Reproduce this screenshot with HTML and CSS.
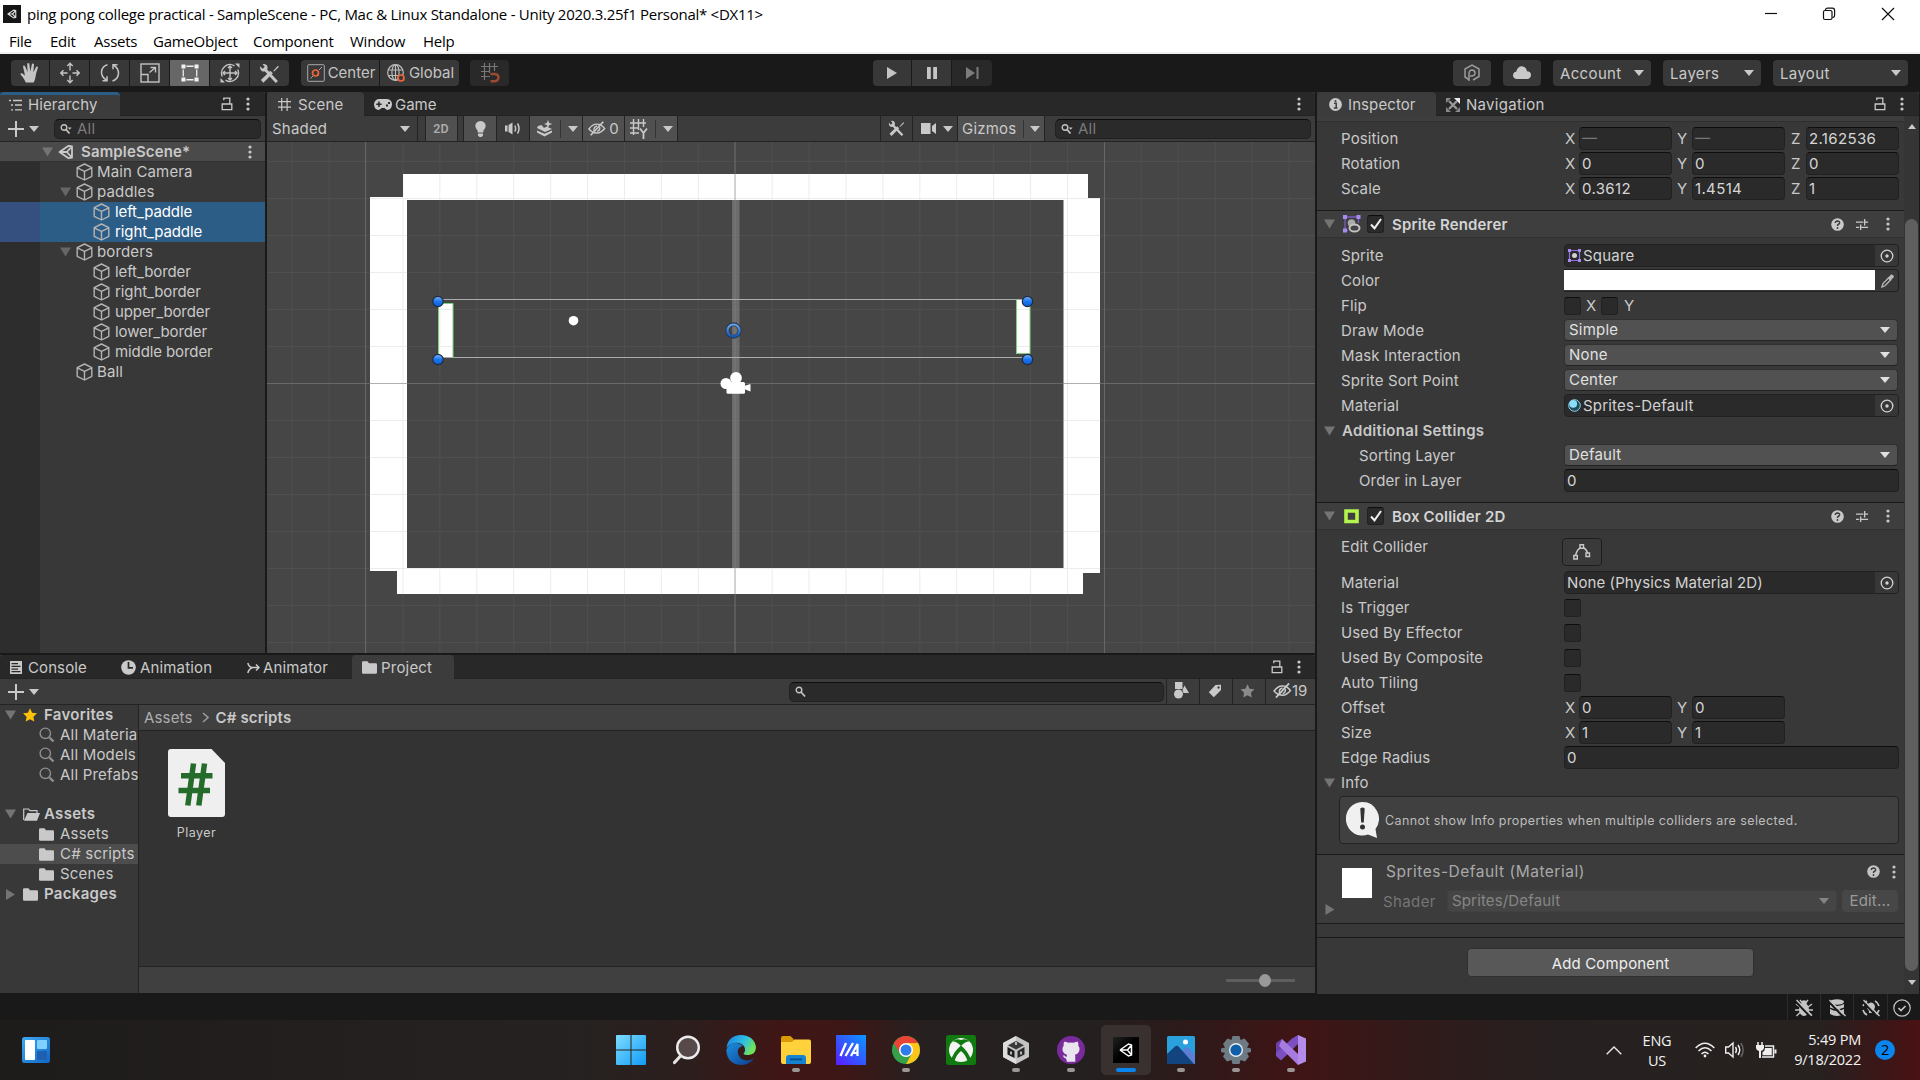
FILE: index.html
```html
<!DOCTYPE html>
<html lang="en">
<head>
<meta charset="utf-8">
<title>ping pong college practical - SampleScene - Unity</title>
<link rel="stylesheet" href="styles.css">
</head>
<body>
<svg class="sprite" width="0" height="0">
  <symbol id="kebab" viewBox="0 0 4 14"><circle cx="2" cy="2" r="1.6"/><circle cx="2" cy="7" r="1.6"/><circle cx="2" cy="12" r="1.6"/></symbol>
  <symbol id="lock" viewBox="0 0 12 14"><path d="M1.2 7h9.6v5.6H1.2zM2.800 3.200V1.200h6V7" fill="none" stroke="currentColor" stroke-width="1.3"/></symbol>
  <symbol id="down" viewBox="0 0 10 6"><path d="M0 0h10L5 6z"/></symbol>
  <symbol id="fold" viewBox="0 0 11 10"><path d="M0 .5h11L5.500 9.500z"/></symbol>
  <symbol id="foldr" viewBox="0 0 10 11"><path d="M.5 0v11L9.500 5.500z"/></symbol>
  <symbol id="cube" viewBox="0 0 17 18"><path d="M8.500 1L15.800 4.600V13.300L8.500 17L1.200 13.300V4.600zM1.200 4.800L8.500 8.400L15.800 4.800M8.500 8.400V17" fill="none" stroke="currentColor" stroke-width="1.400" stroke-linejoin="round"/></symbol>
  <symbol id="unity" viewBox="0 0 16 16"><path d="M1.500 8L10.600 1.800L14 2.300V13.700L10.600 14.200zM1.500 8H8.800M8.800 8L14 2.300M8.800 8L14 13.700" fill="none" stroke="currentColor" stroke-width="1.800" stroke-linejoin="round"/></symbol>
  <symbol id="search" viewBox="0 0 14 12"><circle cx="4" cy="4" r="2.800" fill="none" stroke="currentColor" stroke-width="1.400"/><path d="M6 6l4 4.500" stroke="currentColor" stroke-width="1.800"/></symbol>
  <symbol id="searchd" viewBox="0 0 14 12"><circle cx="4" cy="4.500" r="2.800" fill="none" stroke="currentColor" stroke-width="1.400"/><path d="M6 6.500l3.500 4" stroke="currentColor" stroke-width="1.800"/><path d="M7.800 4.500h3.800l-1.900 2.300z"/></symbol>
  <symbol id="glass" viewBox="0 0 16 16"><circle cx="6.300" cy="6.300" r="5.200" fill="none" stroke="#8f8f8f" stroke-width="1.400"/><path d="M10.500 10.500l4 4" stroke="#8f8f8f" stroke-width="2.400"/></symbol>
  <symbol id="folder" viewBox="0 0 15 13"><path d="M0 1.500Q0 .3 1.200 .3H5.500L7 2.300H13.800Q15 2.300 15 3.500V11.500Q15 12.700 13.800 12.700H1.200Q0 12.700 0 11.500z"/></symbol>
  <symbol id="plus" viewBox="0 0 16 16"><path d="M8 0v16M0 8h16" stroke="currentColor" stroke-width="2"/></symbol>
  <symbol id="tools" viewBox="0 0 20 20"><path d="M3 17.500L12 8.500" stroke="currentColor" stroke-width="3.400"/><path d="M13.500 7.500L18 2.500l1 1L14.500 8z"/><path d="M6 6.500L17 18" stroke="currentColor" stroke-width="2.800"/><path d="M1 3.200L3.500 5.500L5.500 3.600L3.300 1.200Q6.200 .3 7.800 2.600Q8.800 4.500 7.500 6.800Q5 9 2.500 7.600Q.6 6 1 3.200z"/></symbol>
  <symbol id="hash" viewBox="0 0 14 14"><path d="M4 0V14M9.800 0V14M0 4H14M0 9.800H14" stroke="currentColor" stroke-width="1.300"/></symbol>
  <symbol id="eye" viewBox="0 0 20 16"><path d="M1 8.500Q5.500 2.500 10.500 3.200Q15 3.300 18.500 8Q14 13.500 9.500 13Q4.500 12.700 1 8.500zM6.800 10.500Q6 6 10 5.300M10.200 11.200Q13.500 10.500 13 6.500" fill="none" stroke="currentColor" stroke-width="1.600"/><path d="M3 15.500L17 .5" stroke="currentColor" stroke-width="2"/></symbol>
  <symbol id="pick" viewBox="0 0 14 14"><circle cx="7" cy="7" r="5.800" fill="none" stroke="currentColor" stroke-width="1.300"/><circle cx="7" cy="7" r="1.700"/></symbol>
  <symbol id="help" viewBox="0 0 13 13"><circle cx="6.500" cy="6.500" r="6.300"/><path d="M4.300 5Q4.400 3 6.500 3Q8.700 3.100 8.600 4.900Q8.500 5.900 7.200 6.500Q6.500 6.900 6.500 8" fill="none" stroke="#3e3e3e" stroke-width="1.500"/><circle cx="6.500" cy="10" r=".95" fill="#3e3e3e"/></symbol>
  <symbol id="preset" viewBox="0 0 14 14"><path d="M0 4.500H8M10 4.500H13M9.300 1V8M0 10H3.500M5.500 10H13M5 7V13" stroke="currentColor" stroke-width="1.400"/></symbol>
  <symbol id="check" viewBox="0 0 12 12"><path d="M1 6.500L4.500 10.300L11 1" fill="none" stroke="#f0f0f0" stroke-width="2"/></symbol>
  <symbol id="star" viewBox="0 0 14 14"><path d="M7 .3L9.100 4.700L14 5.300L10.400 8.700L11.300 13.500L7 11.200L2.700 13.500L3.600 8.700L0 5.300L4.900 4.700z"/></symbol>
</svg>

<div class="titlebar">
  <svg class="appicon" viewBox="0 0 18 18"><rect width="18" height="18" fill="#151515"/><svg x="4" y="4" width="10" height="10" color="#ddd"><use href="#unity"/></svg></svg>
  <span class="apptitle">ping pong college practical - SampleScene - PC, Mac &amp; Linux Standalone - Unity 2020.3.25f1 Personal* &lt;DX11&gt;</span>
  <svg class="winbtns" viewBox="0 0 150 28" fill="none" stroke="#111" stroke-width="1.200"><path d="M5 13.500H17"/><rect x="63.500" y="10.500" width="8.500" height="9" rx="1.500"/><path d="M65.500 10V9.500Q66 8.200 67.500 8.200H72.500Q74.600 8.400 74.600 10.500V15.500Q74.500 17.500 72.500 17.600"/><path d="M122 8L134 20M134 8L122 20"/></svg>
</div>
<div class="menubar"><span>File</span><span>Edit</span><span>Assets</span><span>GameObject</span><span>Component</span><span>Window</span><span>Help</span></div>

<div class="toolbar">
  <div class="tgroup">
    <div class="tb"><svg width="20" height="22" viewBox="0 0 20 22"><path d="M5.500 20Q4.500 17 .5 12.500Q.3 11 2 11.300L5 13.500L3 4.500Q3.500 3 5 4L7.500 10L7.200 1.800Q8 .3 9.300 1.600L10.300 9.500L12 1.800Q13.200 .8 14 2.200L13.400 10.300L16.200 4.700Q17.500 4 18 5.400Q16 11 15.600 14.500Q15 18 13.700 20.500H6z"/></svg></div>
    <div class="tb"><svg width="20" height="22" viewBox="0 0 20 22" fill="none" stroke="currentColor" stroke-width="1.400"><path d="M10 1.500V8.500M10 13.500V20.500M.8 11H7.500M12.500 11H19.200M7.300 4L10 1.200L12.700 4M7.300 18L10 20.800L12.700 18M3.500 8.200L.8 11L3.500 13.800M16.500 8.200L19.200 11L16.500 13.800"/></svg></div>
    <div class="tb"><svg width="20" height="22" viewBox="0 0 20 22" fill="none" stroke="currentColor" stroke-width="1.500"><path d="M7 18.500Q1 15 1.500 9.500Q2.500 4 7.500 2.800M13 3Q19 6 18.500 12Q17.500 17.500 12.500 19"/><path d="M2.500 18.800H7V14.200M17.500 2.800H13V7.300"/></svg></div>
    <div class="tb"><svg width="20" height="20" viewBox="0 0 20 20" fill="none" stroke="currentColor" stroke-width="1.400"><rect x="1" y="1" width="18" height="18"/><path d="M1 11.500H8V19M9.500 9.500L15.500 4.500M10.500 4.500H15.500V9.500"/></svg></div>
    <div class="tb on"><svg width="18" height="18" viewBox="0 0 20 20"><path d="M6 2.500H14M6 17.500H14M2.500 6V14M17.500 6V14" stroke="currentColor" stroke-width="1.400"/><path d="M.5 .5h4.500v4.500H.5zM15 .5h4.500v4.500H15zM.5 15h4.500v4.500H.5zM15 15h4.500v4.500H15z"/></svg></div>
    <div class="tb"><svg width="22" height="22" viewBox="0 0 22 22" fill="none" stroke="currentColor" stroke-width="1.400"><path d="M15.500 3.800A8.500 8.500 0 0 0 3.300 14.500M6.500 18.200A8.500 8.500 0 0 0 18.700 7.500"/><path d="M11 4V18M4 11H18M9 6L11 4L13 6M9 16L11 18L13 16M6 9L4 11L6 13M16 9L18 11L16 13"/><path d="M16 1.500h4.500v4.500zM1.500 16v4.500h4.500z" fill="currentColor" stroke="none"/></svg></div>
    <div class="tb"><svg width="21" height="21"><use href="#tools"/></svg></div>
  </div>
  <div class="tgroup pivot">
    <div class="tb wide"><svg width="18" height="18" viewBox="0 0 18 18" fill="none" stroke="#a9a9a9"><rect x=".7" y=".7" width="16.600" height="16.600" rx="1"/><circle cx="8.500" cy="9" r="3" stroke="#f0653c" stroke-width="1.700"/><path d="M3.500 14.500L6 12M12 6l3-3"/></svg><span>Center</span></div>
    <div class="tb wide"><svg width="19" height="19" viewBox="0 0 19 19" fill="none" stroke="#bcbcbc" stroke-width="1.200"><circle cx="8.500" cy="8.500" r="7.800"/><ellipse cx="8.500" cy="8.500" rx="3.600" ry="7.800"/><path d="M1 6H16M1 11.500H11M8.500 1V16"/><circle cx="14" cy="14" r="3" stroke="#f0653c" stroke-width="1.700" fill="#383838"/></svg><span>Global</span></div>
  </div>
  <div class="tgroup snap"><div class="tb dim"><svg width="19" height="20" viewBox="0 0 19 20" fill="none" stroke="#777" stroke-width="1.200"><path d="M3.500 0V17M8.500 0V10M13.500 0V8M0 3.500H17M0 8.500H9M0 13.500H9"/><path d="M9.500 11H14Q17.500 11.500 17.500 14.500Q17.300 18 14 18.200H9.500" stroke="#9a4a33" stroke-width="2.400"/></svg></div></div>
  <div class="tgroup play">
    <div class="tb"><svg width="10" height="12"><path d="M0 0L10 6L0 12z"/></svg></div>
    <div class="tb"><svg width="10" height="12"><path d="M0 0h3.800v12H0zM6.200 0H10v12H6.200z"/></svg></div>
    <div class="tb dim"><svg width="13" height="12"><path d="M0 0L9 6L0 12zM10.500 0h2v12h-2z"/></svg></div>
  </div>
  <div class="tright">
    <div class="rb ic"><svg width="16" height="18" viewBox="0 0 16 18" fill="none" stroke="#9b9b9b" stroke-width="1.500"><path d="M4.800 15.500L1 13V5L8 1L15 5V12.500L9 16"/><path d="M5 17V9Q5.500 6 8 6Q11 6.300 11 9Q10.800 11.800 8 12H6"/></svg></div>
    <div class="rb ic"><svg width="18" height="13" viewBox="0 0 18 13"><path d="M4 13Q0 12.500 0 9.200Q.3 6 3.200 5.800Q4.500 .3 9 .3Q13.500 .8 14 5.200Q18 5.500 18 9Q17.800 12.700 14 13z"/></svg></div>
    <div class="rb"><span>Account</span><svg width="10" height="6"><use href="#down"/></svg></div>
    <div class="rb"><span>Layers</span><svg width="10" height="6"><use href="#down"/></svg></div>
    <div class="rb last"><span>Layout</span><svg width="10" height="6"><use href="#down"/></svg></div>
  </div>
</div>

<div class="editor">
  <div class="leftside">
    <div class="upper">
      <section class="panel hierarchy">
        <div class="tabs">
          <div class="tab sel focus"><svg width="14" height="14" viewBox="0 0 14 14" stroke="currentColor" stroke-width="1.300"><path d="M0 2.500H2M4 2.500H13M2 7H4M6 7H13M2 11.800H4M6 11.800H13"/></svg><span>Hierarchy</span></div>
          <div class="tabend"><svg width="12" height="14"><use href="#lock"/></svg><svg width="4" height="14"><use href="#kebab"/></svg></div>
        </div>
        <div class="bar hbar"><svg width="16" height="16"><use href="#plus"/></svg><svg class="pd" width="10" height="6"><use href="#down"/></svg><div class="searchbox"><svg width="14" height="12"><use href="#searchd"/></svg><span>All</span></div></div>
        <div class="tree">
          <div class="hrow scene"><svg class="fd" width="11" height="10"><use href="#fold"/></svg><svg class="un" width="16" height="16"><use href="#unity"/></svg><b>SampleScene*</b><svg class="kb" width="4" height="14"><use href="#kebab"/></svg></div>
          <div class="hrow"><i></i><svg class="cube" width="17" height="18"><use href="#cube"/></svg><span>Main Camera</span></div>
          <div class="hrow"><i><svg width="11" height="10"><use href="#fold"/></svg></i><svg class="cube" width="17" height="18"><use href="#cube"/></svg><span>paddles</span></div>
          <div class="hrow lv2 picked"><i></i><svg class="cube" width="17" height="18"><use href="#cube"/></svg><span>left_paddle</span></div>
          <div class="hrow lv2 picked"><i></i><svg class="cube" width="17" height="18"><use href="#cube"/></svg><span>right_paddle</span></div>
          <div class="hrow"><i><svg width="11" height="10"><use href="#fold"/></svg></i><svg class="cube" width="17" height="18"><use href="#cube"/></svg><span>borders</span></div>
          <div class="hrow lv2"><i></i><svg class="cube" width="17" height="18"><use href="#cube"/></svg><span>left_border</span></div>
          <div class="hrow lv2"><i></i><svg class="cube" width="17" height="18"><use href="#cube"/></svg><span>right_border</span></div>
          <div class="hrow lv2"><i></i><svg class="cube" width="17" height="18"><use href="#cube"/></svg><span>upper_border</span></div>
          <div class="hrow lv2"><i></i><svg class="cube" width="17" height="18"><use href="#cube"/></svg><span>lower_border</span></div>
          <div class="hrow lv2"><i></i><svg class="cube" width="17" height="18"><use href="#cube"/></svg><span>middle border</span></div>
          <div class="hrow"><i></i><svg class="cube" width="17" height="18"><use href="#cube"/></svg><span>Ball</span></div>
        </div>
      </section>

      <section class="panel sceneview">
        <div class="tabs">
          <div class="tab sel tscene"><svg width="13" height="13"><use href="#hash"/></svg><span>Scene</span></div>
          <div class="tab tgame"><svg width="18" height="11" viewBox="0 0 18 11"><path fill-rule="evenodd" d="M5 0H13Q18 .5 18 5.500Q17.500 10.500 13.500 11Q11.500 10.500 10.500 9H7.500Q6.500 10.500 4.500 11Q.5 10.500 0 5.500Q.3 .5 5 0zM4.200 2.500V4.500H2.300V6H4.200V8H5.700V6H7.600V4.500H5.700V2.500zM12 5.500h2v2h-2zM14 3h2v2h-2z"/></svg><span>Game</span></div>
          <div class="tabend"><svg width="4" height="14"><use href="#kebab"/></svg></div>
        </div>
        <div class="bar sbar">
          <div class="shaded"><span>Shaded</span><svg width="10" height="6"><use href="#down"/></svg></div>
          <div class="sb lit two">2D</div>
          <div class="sb lit bulb"><svg width="11" height="16" viewBox="0 0 11 16"><path d="M5.500 0Q10.500 .3 10.700 5Q10.500 7.500 8.500 9.500L8.200 11.500H2.800L2.500 9.500Q.5 7.500 .3 5Q.5 .3 5.500 0zM3 12.500H8V14.500L6.500 16H4.500L3 14.500z"/></svg></div>
          <div class="sb aud"><svg width="16" height="13" viewBox="0 0 16 13"><path d="M0 3.500H2.500V9.500H0zM3.500 3L7.500 .5V12.500L3.500 10z"/><path d="M9.800 3.500Q11.500 6.500 9.800 9.500M12.500 1.500Q15.500 6.500 12.500 11.500" fill="none" stroke="currentColor" stroke-width="1.500"/></svg></div>
          <div class="sb lit fx"><svg width="16" height="17" viewBox="0 0 16 17"><path d="M1 6L4.500 5L7 8L9.500 6.500L15 9L8 12L0 8zM0 10.500L7.500 13.800L15 10.500V12.500L7.500 16.500L0 12.500zM11 0L12.200 3L15.500 4L12.200 5L11 8L9.800 5L7 4L9.800 3z"/></svg><em></em><svg width="10" height="6"><use href="#down"/></svg></div>
          <div class="sb lit vis"><svg width="18" height="15"><use href="#eye"/></svg><span>0</span></div>
          <div class="sb lit grid"><svg width="18" height="20" viewBox="0 0 18 20" fill="none" stroke="currentColor"><path d="M3.500 0V16M8.500 0V11M13.500 0V8M0 4H16M0 9H9M0 14H9" stroke-width="1.400"/><path d="M10 9.500L13.500 14L17 9.500M13.500 14V20" stroke-width="1.800"/></svg><em></em><svg width="10" height="6"><use href="#down"/></svg></div>
          <div class="fill"></div>
          <div class="sb tl"><svg width="17" height="17"><use href="#tools"/></svg></div>
          <div class="sb cam"><svg width="15" height="11" viewBox="0 0 15 11"><path d="M0 0h9.500v11H0zM11 3L15 0V11L11 8z"/></svg><svg width="10" height="6"><use href="#down"/></svg></div>
          <div class="sb lit giz"><span>Gizmos</span><em></em><svg width="10" height="6"><use href="#down"/></svg></div>
          <div class="searchbox"><svg width="14" height="12"><use href="#searchd"/></svg><span>All</span></div>
        </div>
        <svg class="viewport" width="1048" height="511" viewBox="267 142 1048 511">
          <defs>
            <linearGradient id="ball" x1="0" y1="0" x2="0" y2="1"><stop offset="0" stop-color="#7db4f5"/><stop offset=".5" stop-color="#1b75ee"/><stop offset="1" stop-color="#0b5fd8"/></linearGradient>
            <linearGradient id="ring" x1="0" y1="0" x2="0" y2="1"><stop offset="0" stop-color="#6ba4ea"/><stop offset="1" stop-color="#0f59c0"/></linearGradient>
            <pattern id="cells" x="365.500" y="161" width="36.920" height="37" patternUnits="userSpaceOnUse"><path d="M.5 0V37M0 .5H36.920" stroke="#808080" stroke-opacity=".15" fill="none"/></pattern>
          </defs>
          <rect x="267" y="142" width="1048" height="511" fill="#464646"/>
          <g fill="#fff"><rect x="403" y="174" width="685" height="26"/><rect x="370" y="197" width="37" height="374"/><rect x="397" y="568" width="686" height="26"/><rect x="1063.500" y="198" width="36.500" height="375"/><rect x="438.500" y="303" width="14.500" height="55"/><rect x="1016" y="299" width="14" height="54.500"/></g>
          <rect x="732" y="200" width="7.500" height="368" fill="#6c6c6c"/>
          <rect x="267" y="142" width="1048" height="511" fill="url(#cells)"/>
          <path d="M267 383.500H1315" stroke="#808080" stroke-opacity=".55"/><path d="M365.500 142V653M1104.500 142V653" stroke="#808080" stroke-opacity=".5"/><path d="M735 142V653" stroke="#808080" stroke-opacity=".3" stroke-width="2"/>
          <path d="M438.500 299.500H1028M438.500 357.500H1028" stroke="#ababab"/>
          <path d="M438.500 358V303.500H453V358M1016.500 299V353.500H1030V299" fill="none" stroke="#7cd17c"/>
          <circle cx="573.500" cy="320.700" r="4.800" fill="#fff"/>
          <circle cx="733.500" cy="330.500" r="6.200" fill="none" stroke="#283a55" stroke-width="4"/><circle cx="733.500" cy="330.500" r="6" fill="none" stroke="url(#ring)" stroke-width="2.200"/>
          <g fill="url(#ball)" stroke="#1e2b40" stroke-width="1.200"><circle cx="438" cy="301.500" r="5.200"/><circle cx="438" cy="359.500" r="5.200"/><circle cx="1027.500" cy="301.500" r="5.200"/><circle cx="1027.500" cy="359.500" r="5.200"/></g>
          <g fill="#fff"><circle cx="726" cy="383.500" r="5.500"/><circle cx="736" cy="378" r="5.900"/><rect x="726.500" y="382" width="18.500" height="11.800" rx="1.500"/><path d="M744 386L750.500 384V391.500L744 389z"/></g>
        </svg>
      </section>
    </div>

    <section class="panel project">
      <div class="tabs">
        <div class="tab tcon"><svg width="12" height="13" viewBox="0 0 12 13"><path fill-rule="evenodd" d="M0 0H12V13H0zM1.500 2V3.300H8V2zM1.500 4.700V6H10.500V4.700zM1.500 7.400V8.700H8V7.400zM1.500 10V11.300H10.500V10z"/></svg><span>Console</span></div>
        <div class="tab tani"><svg width="15" height="15" viewBox="0 0 15 15"><circle cx="7.500" cy="7.500" r="7.300"/><path d="M7.500 2V7.800H12" fill="none" stroke="#282828" stroke-width="1.700"/></svg><span>Animation</span></div>
        <div class="tab tmat"><svg width="13" height="12" viewBox="0 0 13 12" fill="none" stroke="currentColor" stroke-width="1.500"><path d="M.8 1Q2 5.500 5.500 5.500H12M.8 11Q2 6.500 5.500 5.700M9 2.500L12 5.500L9 8.500"/></svg><span>Animator</span></div>
        <div class="tab sel tprj"><svg width="15" height="13"><use href="#folder"/></svg><span>Project</span></div>
        <div class="tabend"><svg width="12" height="14"><use href="#lock"/></svg><svg width="4" height="14"><use href="#kebab"/></svg></div>
      </div>
      <div class="bar pbar"><svg width="16" height="16"><use href="#plus"/></svg><svg class="pd" width="10" height="6"><use href="#down"/></svg><div class="fill"></div><div class="searchbox"><svg width="14" height="12"><use href="#search"/></svg></div>
        <div class="pb"><svg width="15" height="17" viewBox="0 0 15 17"><rect x="1" width="7.500" height="7"/><circle cx="4.500" cy="12" r="4.500"/><path d="M10.500 3.500L15 11H9.500L8.500 8z"/></svg></div>
        <div class="pb"><svg width="14" height="14" viewBox="0 0 14 14"><path fill-rule="evenodd" d="M7.500 1L13 .8V6L5.800 13.300L.8 8.300zM10.500 2.300a1.200 1.200 0 1 0 .1 0z"/></svg></div>
        <div class="pb gray"><svg width="15" height="14" viewBox="0 0 14 14"><use href="#star"/></svg></div>
        <div class="pb cnt"><svg width="19" height="15"><use href="#eye"/></svg><span>19</span></div>
      </div>
      <div class="pmain">
        <div class="ptree">
          <div class="prow top"><svg class="pf" width="11" height="10"><use href="#fold"/></svg><svg width="14" height="14" color="#fdc108"><use href="#star"/></svg><b>Favorites</b></div>
          <div class="prow sub"><svg width="16" height="16"><use href="#glass"/></svg><span>All Materia</span></div>
          <div class="prow sub"><svg width="16" height="16"><use href="#glass"/></svg><span>All Models</span></div>
          <div class="prow sub"><svg width="16" height="16"><use href="#glass"/></svg><span>All Prefabs</span></div>
          <div class="prow top asset"><svg class="pf" width="11" height="10"><use href="#fold"/></svg><svg width="17" height="13" viewBox="0 0 17 13"><path d="M.7 12V1H5.500L7 2.700H14V5" fill="none" stroke="currentColor" stroke-width="1.200"/><path d="M4.500 5H17L14 12.700H1z"/></svg><b>Assets</b></div>
          <div class="prow sub"><svg width="15" height="13"><use href="#folder"/></svg><span>Assets</span></div>
          <div class="prow sub cur"><svg width="15" height="13"><use href="#folder"/></svg><span>C# scripts</span></div>
          <div class="prow sub"><svg width="15" height="13"><use href="#folder"/></svg><span>Scenes</span></div>
          <div class="prow top"><svg class="pf" width="10" height="11"><use href="#foldr"/></svg><svg width="15" height="13"><use href="#folder"/></svg><b>Packages</b></div>
        </div>
        <div class="pbody">
          <div class="crumbs"><span>Assets</span><svg width="7" height="11" viewBox="0 0 7 11"><path d="M1 1L6 5.500L1 10" fill="none" stroke="#9a9a9a" stroke-width="1.600"/></svg><b>C# scripts</b></div>
          <div class="files"><div class="file"><svg width="57" height="68" viewBox="0 0 57 68"><path d="M3 0H43.500L57 14V65Q57 68 54 68H3Q0 68 0 65V3Q0 0 3 0z" fill="#efefef"/><path d="M25.500 14.500L19.800 56.500M36.500 14.500L30.800 56.500" stroke="#256b2a" stroke-width="5.500"/><path d="M13 26.800H44.500M10.500 41.500H42" stroke="#256b2a" stroke-width="5.500"/></svg><span>Player</span></div></div>
          <div class="pfoot"><div class="slider"><div class="knob"></div></div></div>
        </div>
      </div>
    </section>
  </div>

  <section class="panel inspector">
    <div class="tabs">
      <div class="tab sel tins"><svg width="13" height="13" viewBox="0 0 13 13"><circle cx="6.500" cy="6.500" r="6.400"/><path d="M5 5.300H7.200V10M4.800 10H8.500" fill="none" stroke="#3c3c3c" stroke-width="1.500"/><circle cx="6.500" cy="3" r="1" fill="#3c3c3c"/></svg><span>Inspector</span></div>
      <div class="tab tnav"><svg width="14" height="14" viewBox="0 0 14 14"><path d="M3 11L11 3M3 3L11 11" stroke="#999" stroke-width="2.300"/><path d="M8 0H14V6z" fill="#eee"/><path d="M0 0H5L0 5zM0 14V9L5 14zM14 14V9L9 14z" fill="#888"/></svg><span>Navigation</span></div>
      <div class="tabend"><svg width="12" height="14"><use href="#lock"/></svg><svg width="4" height="14"><use href="#kebab"/></svg></div>
    </div>
    <div class="iwrap">
      <div class="icontent">
        <div class="strip"></div>
        <div class="props transform">
          <div class="irow"><label>Position</label><u>X</u><div class="fld mix">—</div><u>Y</u><div class="fld mix">—</div><u>Z</u><div class="fld">2.162536</div></div>
          <div class="irow"><label>Rotation</label><u>X</u><div class="fld">0</div><u>Y</u><div class="fld">0</div><u>Z</u><div class="fld">0</div></div>
          <div class="irow"><label>Scale</label><u>X</u><div class="fld">0.3612</div><u>Y</u><div class="fld">1.4514</div><u>Z</u><div class="fld">1</div></div>
        </div>
        <div class="chead"><svg class="cf" width="11" height="10"><use href="#fold"/></svg><svg class="ci" width="18" height="18" viewBox="0 0 18 18"><path d="M2 2H15.500V8M2 2V15.500H5" fill="none" stroke="#7b5cc4" stroke-width="1.300"/><path d="M0 0h4v4H0zM13.500 0h4v4h-4zM0 13.500h4v4H0z" fill="#a98bf0"/><circle cx="8.500" cy="8" r="3.800" fill="#aaa"/><ellipse cx="11.500" cy="13" rx="5" ry="3.600" fill="#444" stroke="#c4c4c4" stroke-width="2"/></svg><div class="cb"><svg width="12" height="12"><use href="#check"/></svg></div><b>Sprite Renderer</b><div class="hico"><svg width="13" height="13"><use href="#help"/></svg><svg width="13" height="13"><use href="#preset"/></svg><svg width="4" height="14"><use href="#kebab"/></svg></div></div>
        <div class="props sr">
          <div class="irow"><label>Sprite</label><div class="obj"><svg width="13" height="13" viewBox="0 0 13 13"><path d="M1.500 1.500h10v10h-10z" fill="none" stroke="#8f70dc" stroke-width="1.200"/><path d="M0 0h3v3H0zM10 0h3v3h-3zM0 10h3v3H0zM10 10h3v3h-3z" fill="#a98bf0"/><circle cx="6.500" cy="6.500" r="2.500"/></svg><span>Square</span><div class="pk"><svg width="14" height="14"><use href="#pick"/></svg></div></div></div>
          <div class="irow"><label>Color</label><div class="color"><div class="swatch"></div><svg width="13" height="14" viewBox="0 0 13 14"><path d="M1 13L2 9.500L7.500 4L9.500 6L4 11.800z" fill="none" stroke="currentColor" stroke-width="1.300"/><path d="M6.500 3.500L8 2.700L10 .5Q12.500 0 13 3L10.500 5.500L9.800 7z"/></svg></div></div>
          <div class="irow"><label>Flip</label><div class="cb"></div><u class="fx1">X</u><div class="cb"></div><u class="fx2">Y</u></div>
          <div class="irow"><label>Draw Mode</label><div class="dd"><span>Simple</span><svg width="10" height="6"><use href="#down"/></svg></div></div>
          <div class="irow"><label>Mask Interaction</label><div class="dd"><span>None</span><svg width="10" height="6"><use href="#down"/></svg></div></div>
          <div class="irow"><label>Sprite Sort Point</label><div class="dd"><span>Center</span><svg width="10" height="6"><use href="#down"/></svg></div></div>
          <div class="irow"><label>Material</label><div class="obj"><svg width="13" height="13" viewBox="0 0 13 13"><circle cx="6.500" cy="6.500" r="5.800" fill="#234b5e" stroke="#8fd4ee" stroke-width="1"/><circle cx="5.200" cy="4.800" r="3.900" fill="#8cdcfb"/></svg><span>Sprites-Default</span><div class="pk"><svg width="14" height="14"><use href="#pick"/></svg></div></div></div>
          <div class="irow foldrow"><svg class="cf" width="11" height="10"><use href="#fold"/></svg><b>Additional Settings</b></div>
          <div class="irow ind"><label>Sorting Layer</label><div class="dd"><span>Default</span><svg width="10" height="6"><use href="#down"/></svg></div></div>
          <div class="irow ind"><label>Order in Layer</label><div class="fld long">0</div></div>
        </div>
        <div class="chead"><svg class="cf" width="11" height="10"><use href="#fold"/></svg><svg class="ci" width="18" height="18" viewBox="0 0 18 18"><path d="M3 4h11v10.500H3z" fill="none" stroke="#b4f44e" stroke-width="3.600"/></svg><div class="cb"><svg width="12" height="12"><use href="#check"/></svg></div><b>Box Collider 2D</b><div class="hico"><svg width="13" height="13"><use href="#help"/></svg><svg width="13" height="13"><use href="#preset"/></svg><svg width="4" height="14"><use href="#kebab"/></svg></div></div>
        <div class="props bc">
          <div class="irow edit"><label>Edit Collider</label><div class="ebtn"><svg width="18" height="16" viewBox="0 0 18 16" fill="none" stroke="currentColor" stroke-width="1.400"><path d="M2.500 11.500Q4 5 8 3.500M10 3.500Q13.500 5 14.500 9"/><path d="M7 .8h3.500v3.500H7zM.8 11.500h3.500V15H.8zM13 9h3.500v3.500H13z"/></svg></div></div>
          <div class="irow"><label>Material</label><div class="obj plain"><span>None (Physics Material 2D)</span><div class="pk"><svg width="14" height="14"><use href="#pick"/></svg></div></div></div>
          <div class="irow"><label>Is Trigger</label><div class="cb"></div></div>
          <div class="irow"><label>Used By Effector</label><div class="cb"></div></div>
          <div class="irow"><label>Used By Composite</label><div class="cb"></div></div>
          <div class="irow"><label>Auto Tiling</label><div class="cb"></div></div>
          <div class="irow"><label>Offset</label><u>X</u><div class="fld">0</div><u>Y</u><div class="fld">0</div></div>
          <div class="irow"><label>Size</label><u>X</u><div class="fld">1</div><u>Y</u><div class="fld">1</div></div>
          <div class="irow"><label>Edge Radius</label><div class="fld long">0</div></div>
          <div class="irow foldrow"><svg class="cf" width="11" height="10"><use href="#fold"/></svg><span>Info</span></div>
          <div class="helpbox"><svg width="33" height="36" viewBox="0 0 33 36"><path d="M16.500 0A16.300 16.800 0 0 1 29.500 27L31 36L22 32.500A16.300 16.800 0 1 1 16.500 0z" fill="#f0f0f0"/><path d="M14.300 6.500Q16.500 4.500 18.700 6.500L17.800 20.500H15.200z" fill="#333"/><circle cx="16.500" cy="25" r="2.500" fill="#333"/></svg><span>Cannot show Info properties when multiple colliders are selected.</span></div>
        </div>
        <div class="mat">
          <div class="mprev"><div class="msq"></div><svg width="10" height="11"><use href="#foldr"/></svg></div>
          <div class="minfo">
            <div class="mtop"><span>Sprites-Default (Material)</span><svg width="13" height="13"><use href="#help"/></svg><svg width="4" height="14"><use href="#kebab"/></svg></div>
            <div class="mbot"><span>Shader</span><div class="dd off"><span>Sprites/Default</span><svg width="10" height="6"><use href="#down"/></svg></div><div class="editb">Edit...</div></div>
          </div>
        </div>
        <div class="gapline"></div>
        <div class="addwrap"><div class="addbtn">Add Component</div></div>
      </div>
      <div class="scroll"><svg width="8" height="5"><path d="M0 5h8L4 0z"/></svg><div class="thumb"></div><svg width="8" height="5"><path d="M0 0h8L4 5z"/></svg></div>
    </div>
  </section>
</div>

<div class="status">
  <div><svg width="20" height="18" viewBox="0 0 20 18"><ellipse cx="10" cy="10.500" rx="5" ry="6.500"/><circle cx="10" cy="4" r="2.800"/><path d="M2 5L6 8M1 11H6M2.500 17L6 13.500M18 5L14 8M19 11H14M17.500 17L14 13.500M6 1L8 3.500M14 1L12 3.500" stroke="currentColor" stroke-width="1.400"/><path d="M1 2L17 18.500" stroke="#191919" stroke-width="2"/><path d="M2.500 1L18 16.500" stroke="currentColor" stroke-width="1.500"/></svg></div>
  <div><svg width="20" height="18" viewBox="0 0 20 18"><ellipse cx="10" cy="3" rx="7" ry="2.700"/><path d="M3 5Q10 9 17 5V8.500Q10 12 3 8.500zM3 10Q10 14 17 10V15Q10 19 3 15z"/><path d="M1 2L17 18.500" stroke="#191919" stroke-width="2"/><path d="M2.500 1L18.500 17" stroke="currentColor" stroke-width="1.500"/></svg></div>
  <div><svg width="20" height="18" viewBox="0 0 20 18"><path d="M10 3.500Q14 4 14 8Q13.500 10.500 12 12V14H8V12Q6 10.500 6 8Q6 4 10 3.500z"/><path d="M2 7Q3 3.500 6 2M14 2Q17 3.500 18 7M18 11Q17 14.500 14 16M6 16Q3 14.500 2 11" fill="none" stroke="currentColor" stroke-width="1.700"/><path d="M1 2L17 18.500" stroke="#191919" stroke-width="2"/><path d="M2.500 1L18.500 17" stroke="currentColor" stroke-width="1.500"/></svg></div>
  <div><svg width="18" height="18" viewBox="0 0 18 18" fill="none" stroke="currentColor"><circle cx="9" cy="9" r="8.200" stroke-width="1.200"/><path d="M5.500 9L8 11.500L12.500 7" stroke-width="1.700"/></svg></div>
</div>

<div class="taskbar">
  <svg class="widget" width="28" height="26" viewBox="0 0 28 26"><defs><linearGradient id="wg" x1="0" y1="0" x2="1" y2="1"><stop offset="0" stop-color="#3fa9f3"/><stop offset="1" stop-color="#0f66c4"/></linearGradient></defs><rect width="28" height="26" rx="2.500" fill="url(#wg)"/><rect x="3" y="3" width="10" height="20" rx="1" fill="#fff"/><rect x="15" y="3" width="10" height="9" rx="1" fill="#7fd0ff"/><rect x="15" y="14" width="10" height="9" rx="1" fill="#1d5fb0"/></svg>
  <div class="apps">
    <div><svg width="30" height="30" viewBox="0 0 30 30"><defs><linearGradient id="wn" x1="0" y1="0" x2="1" y2="1"><stop offset="0" stop-color="#7fdcff"/><stop offset="1" stop-color="#0f9bf5"/></linearGradient></defs><path d="M1 0H14.500V14.500H0V1Q0 0 1 0zM15.500 0H29Q30 0 30 1V14.500H15.500zM0 15.500H14.500V30H1Q0 30 0 29zM15.500 15.500H30V29Q30 30 29 30H15.500z" fill="url(#wn)"/></svg></div>
    <div><svg width="30" height="30" viewBox="0 0 30 30"><circle cx="17" cy="12.500" r="10.800" fill="#57494a" stroke="#ececec" stroke-width="2.400"/><path d="M9.500 21L3.500 27.500" stroke="#e4e4e4" stroke-width="3.200" stroke-linecap="round"/></svg></div>
    <div><svg width="30" height="30" viewBox="0 0 30 30"><defs><linearGradient id="e1" x1="0" y1="0" x2="1" y2=".4"><stop offset=".2" stop-color="#2191e6"/><stop offset=".65" stop-color="#2fc2df"/><stop offset="1" stop-color="#6fe25a"/></linearGradient><linearGradient id="e2" x1="0" y1="0" x2="1" y2="1"><stop offset="0" stop-color="#1c8fdf"/><stop offset="1" stop-color="#0d3f92"/></linearGradient></defs><path d="M.5 13Q2 .5 15 0Q28 .5 30 12Q30 19.500 22.500 20Q18 20 17.500 18.500Q20 16 18.500 12Q15.500 7.500 10 7.800Q4 8.200 .5 13z" fill="url(#e1)"/><path d="M.3 15Q3 7.500 10.500 8Q15.500 8.500 16.500 11Q10.500 13 12 19Q14.500 25.500 21 25.500Q25 25.500 28 23Q24 29.800 15 30Q1 29 .3 15z" fill="url(#e2)"/></svg></div>
    <div class="run"><svg width="30" height="28" viewBox="0 0 30 28"><path d="M0 2Q0 0 2 0H9.500L12.500 3V8H0z" fill="#d99a06"/><path d="M0 6H11L13 3.500H28Q30 3.500 30 5.500V26Q30 28 28 28H2Q0 28 0 26z" fill="#ffd13b"/><path d="M5 28V22Q5 19 8 19H22Q25 19 25 22V28z" fill="#1582d2"/><rect x="9" y="22.500" width="12" height="1.800" fill="#0a4f8c"/></svg></div>
    <div><svg width="30" height="30" viewBox="0 0 30 30"><defs><linearGradient id="ma" x1="1" y1="0" x2="0" y2="1"><stop offset="0" stop-color="#0a97ff"/><stop offset="1" stop-color="#5a1cff"/></linearGradient></defs><rect width="30" height="30" fill="url(#ma)"/><path d="M4.500 21L10 8M9.500 21L17 8" stroke="#fff" stroke-width="2.300"/><path d="M15 21L21.500 9V21M17 18H22" fill="none" stroke="#fff" stroke-width="2.200"/></svg></div>
    <div class="run"><svg width="28" height="28" viewBox="0 0 28 28"><circle cx="14" cy="14" r="14" fill="#34a04a"/><path d="M14 7H26.100A14 14 0 0 1 14 28L20 17.500z" fill="#fdc518"/><path d="M1.900 7A14 14 0 0 1 26.100 7H14L8 10.500L8 17.500z" fill="#ea4335"/><circle cx="14" cy="14" r="7" fill="#fff"/><circle cx="14" cy="14" r="5.500" fill="#2f7bea"/></svg></div>
    <div><svg width="30" height="30" viewBox="0 0 30 30"><rect width="30" height="30" rx="2.500" fill="#107a10"/><circle cx="15" cy="15" r="12" fill="#f4f4f4"/><path d="M6.500 6.500Q10.500 6 15 11Q19.500 6 23.500 6.500Q20 3 15 5Q10 3 6.500 6.500z" fill="#107a10"/><path d="M5 25Q8 16 15 10.500Q22 16 25 25L21.500 25.500Q19 19 15 16Q11 19 8.500 25.500z" fill="#107a10"/></svg></div>
    <div class="run"><svg width="26" height="28" viewBox="0 0 26 28"><path d="M13 0L26 7V21L13 28L0 21V7z" fill="#c4c4c4"/><path d="M0 7L13 0V5L4.500 9.500V18.500L13 23V28L0 21z" fill="#dcdcdc"/><path d="M13 5L21 9.300L13 13.600L5 9.300z" fill="#3a3a3a"/><path d="M4.500 11L11.500 15V22L4.500 18.500z" fill="#1d1d1d"/><path d="M21.500 11L14.500 15V22L21.500 18.500z" fill="#2b2b2b"/><path d="M13 9V6M8 15.500V18.500M18 15.500V18.500" stroke="#c8c8c8" stroke-width="1.800"/></svg></div>
    <div class="run"><svg width="28" height="28" viewBox="0 0 28 28"><circle cx="14" cy="14" r="14" fill="#7a2b9b"/><path d="M10.500 25V21.500Q7.500 22 6.500 19.500M17.500 25V20Q17.500 19 16.800 18.300Q21.800 17.500 21.800 13Q21.800 11 20.500 9.700Q21 8 20.300 6.500Q18.500 6.500 17 7.600Q14 7 11 7.600Q9.500 6.500 7.700 6.500Q7 8 7.500 9.700Q6.200 11 6.200 13Q6.200 17.500 11.200 18.300Q10.500 19 10.500 20V25z" fill="#e9e4ee" stroke="#e9e4ee" stroke-width="1.500"/></svg></div>
    <div class="run active"><svg width="26" height="26" viewBox="0 0 26 26"><defs><linearGradient id="uk" x1="0" y1="0" x2="1" y2="1"><stop offset="0" stop-color="#222"/><stop offset=".5" stop-color="#000"/></linearGradient></defs><rect width="26" height="26" fill="url(#uk)"/><path d="M7 13L15.500 7L18.500 8V18L15.500 19L7 13M7 13H14.500M14.500 13L18 8.500M14.500 13L18 17.500" fill="none" stroke="#fff" stroke-width="1.500"/></svg></div>
    <div class="run"><svg width="28" height="28" viewBox="0 0 28 28"><rect width="28" height="28" rx="1.500" fill="#2aa0dd"/><path d="M28 13.500V28H14L10 20L18 12Q20 10.500 22 12.500L28 19z" fill="#5b7fd6"/><path d="M0 18L8 10.500Q10 9 12 11L27 28H0z" fill="#12447f"/><circle cx="18.500" cy="6" r="2.500" fill="#fff"/></svg></div>
    <div class="run"><svg width="30" height="28" viewBox="0 0 30 28"><path d="M11.500 0H18.500L19.500 4L23.500 2.500L28 8L26 11.500L30 12.500V16L26 17L28 20.500L24 25.500L19.500 24L18.500 28H11.500L10.500 24L6 25.500L2 20.500L4 17L0 16V12.500L4 11.500L2 8L6.500 2.500L10.500 4z" fill="#6e7b85"/><circle cx="15" cy="14" r="7" fill="#e8eef2"/><circle cx="15" cy="14" r="5.600" fill="#0f5fa8"/></svg></div>
    <div class="run"><svg width="30" height="30" viewBox="0 0 30 30"><path d="M0 8L6 4L11 9L3 16V19L0 21z" fill="#6a3fa8"/><path d="M0 21V18L16 3.500L22 0V9L5 25.500z" fill="#7b4fc0"/><path d="M22 0L30 3.500V26.500L22 30z" fill="#b48be8"/><path d="M6 4L22 19V30L3 11z" fill="#a67be0"/></svg></div>
  </div>
  <div class="tray">
    <svg class="chev" width="16" height="9" viewBox="0 0 16 9"><path d="M.7 8.300L8 1L15.300 8.300" fill="none" stroke="#e8e8e8" stroke-width="1.400"/></svg>
    <div class="lang"><span>ENG</span><span>US</span></div>
    <svg class="wifi" width="20" height="16" viewBox="0 0 20 16" fill="none" stroke="#eee" stroke-width="1.500"><path d="M.7 6Q10-3.500 19.300 6M3.500 9Q10 2.500 16.500 9M6.500 12Q10 8.500 13.500 12"/><circle cx="10" cy="14" r="1.400" fill="#eee" stroke="none"/></svg>
    <svg class="snd" width="20" height="18" viewBox="0 0 20 18" fill="none" stroke="#eee" stroke-width="1.400"><path d="M.7 6H3.500L8 2V16L3.500 12H.7z"/><path d="M10.500 6Q12.500 9 10.500 12M13 4Q16.500 9 13 14"/><path d="M15.800 2Q20.500 9 15.800 16" stroke="#666"/></svg>
    <svg class="bat" width="21" height="17" viewBox="0 0 21 17"><path d="M2 0V3M6 0V3" stroke="#eee" stroke-width="1.500"/><path d="M0 3H8V6Q7.500 8.500 5 9V16H3V9Q.3 8.500 0 6z" fill="#eee"/><path d="M9 4H17.500V15H6" fill="none" stroke="#eee" stroke-width="1.500"/><path d="M9 6H15.800V13.300H6.500V10Q9 9 9 6zM18.500 7.500h2v4h-2z" fill="#eee"/></svg>
    <div class="clock"><span>5:49 PM</span><span>9/18/2022</span></div>
    <div class="badge">2</div>
  </div>
</div>
</body>
</html>
```

FILE: styles.css
```css
* { box-sizing: border-box; }
body { margin: 0; width: 1920px; height: 1080px; overflow: hidden; display: flex; flex-direction: column; background: #191919; color: #c9c9c9; font: 15px/20px Inter, "Liberation Sans", sans-serif; letter-spacing: .2px; white-space: nowrap; }
svg { display: block; flex: none; fill: currentColor; }
svg[fill="none"] { fill: none; }
.sprite { position: absolute; }
b { font-weight: 600; }
u, i { text-decoration: none; font-style: normal; }
.fill { flex: 1; }

.titlebar { height: 28px; background: #fff; display: flex; align-items: center; color: #000; font: 15px/28px "Open Sans", "Noto Sans", sans-serif; letter-spacing: -.27px; }
.appicon { width: 18px; height: 18px; margin-left: 3px; }
.apptitle { margin-left: 6px; flex: 1; }
.winbtns { width: 150px; height: 28px; margin-right: 10px; }
.menubar { height: 26px; background: #fff; border-bottom: 2px solid #f0f0f0; display: flex; color: #000; font: 15px/27px "Open Sans", "Noto Sans", sans-serif; letter-spacing: -.25px; padding-left: 9px; }
.menubar span:nth-child(1) { width: 41px; }
.menubar span:nth-child(2) { width: 44px; }
.menubar span:nth-child(3) { width: 59px; }
.menubar span:nth-child(4) { width: 100px; }
.menubar span:nth-child(5) { width: 97px; }
.menubar span:nth-child(6) { width: 73px; }

.toolbar { height: 38px; padding: 6px 12px 0 11px; display: flex; align-items: flex-start; }
.tgroup { display: flex; gap: 1px; border-radius: 4px; overflow: hidden; height: 26px; }
.tb { width: 39px; height: 26px; background: #383838; display: flex; align-items: center; justify-content: center; color: #c4c4c4; }
.tb:first-child { width: 38px; }
.tb.on { background: #676767; color: #f2f2f2; }
.tb.dim { background: #292929; color: #7c7c7c; }
.tb.wide { width: 78px; gap: 3px; letter-spacing: 0; padding-left: 2px; }
.tb.wide + .tb.wide { width: 79px; }
.pivot { margin-left: 12px; }
.snap { margin-left: 11px; }
.snap .tb:first-child { width: 39px; padding-left: 2px; }
.play { margin-left: 364px; }
.play .tb:last-child { width: 40px; }
.tright { margin-left: auto; display: flex; gap: 12px; }
.rb { width: 98px; height: 26px; border-radius: 4px; background: #383838; display: flex; align-items: center; justify-content: space-between; padding: 1px 7px 0; letter-spacing: .35px; }
.rb svg { margin-top: -1px; }
.rb.ic { width: 38px; justify-content: center; padding: 0; }
.rb.last { width: 135px; }

.editor { height: 902px; display: flex; gap: 2px; }
.leftside { width: 1315px; display: flex; flex-direction: column; gap: 2px; }
.upper { height: 561px; display: flex; gap: 2px; }
.panel { background: #383838; display: flex; flex-direction: column; }
.hierarchy { width: 265px; }
.sceneview { width: 1048px; }
.project { height: 338px; }
.inspector { width: 602px; }

.tabs { height: 24px; background: #282828; display: flex; border-radius: 4px 4px 0 0; border-bottom: 1px solid #232323; }
.tab { height: 24px; display: flex; align-items: center; border-radius: 4px 4px 0 0; padding-top: 1px; }
.tab.sel { background: #3c3c3c; }
.tab.focus { width: 120px; padding-left: 9px; gap: 5px; border-top: 3px solid #2c5d87; padding-top: 0; letter-spacing: .1px; }
.focus svg, .focus span { margin-top: -1px; }
.tabend { margin-left: auto; display: flex; gap: 14px; align-items: center; padding-right: 14px; height: 23px; }
.hierarchy .tabend { gap: 13px; padding-right: 15px; }
.bar { height: 26px; background: #3c3c3c; border-bottom: 1px solid #232323; display: flex; align-items: center; }
.hbar, .pbar { padding-left: 8px; }
.pd { margin-left: 5px; }
.searchbox { height: 20px; background: #2a2a2a; border: 1px solid #212121; border-top-color: #0d0d0d; border-radius: 5px; display: flex; align-items: center; gap: 4px; padding-left: 5px; color: #c4c4c4; }
.searchbox span { color: #7b7b7b; }
.hbar .searchbox { margin-left: 15px; width: 207px; gap: 3px; }

.tree { flex: 1; background: linear-gradient(90deg, #2d2d2d 40px, #383838 40px); }
.hrow { height: 20px; display: flex; align-items: center; padding-left: 60px; letter-spacing: .15px; }
.hrow i { width: 16px; display: block; color: #666; }
.cube { margin-right: 4px; color: #b4b4b4; }
.lv2 { padding-left: 77px; letter-spacing: -.1px; }
.lv2 .cube { margin-right: 5px; }
.picked { background: linear-gradient(90deg, #35507e 40px, #2c5d87 40px); color: #fff; }
.scene { background: #4a4a4a; border-bottom: 1px solid #303030; padding-left: 42px; }
.scene .fd { color: #747474; }
.un { margin: 0 7px 0 5px; }
.scene .kb { margin-left: auto; margin-right: 13px; }
.cf, .pf { color: #747474; }

.tscene { width: 97px; padding-left: 11px; gap: 7px; }
.tgame { padding-left: 10px; gap: 3px; letter-spacing: 0; }
.sbar { align-items: stretch; }
.sbar > .searchbox { align-self: center; width: 256px; margin: 0 4px 0 10px; gap: 3px; }
.shaded { width: 151px; padding: 0 7px 0 5px; display: flex; align-items: center; justify-content: space-between; border-right: 1px solid #232323; }
.sb { display: flex; align-items: center; justify-content: center; border-right: 1px solid #232323; }
.sb.lit { background: #505050; }
.sb em { width: 1px; height: 18px; background: #343434; }
.two { width: 33px; margin-left: 7px; border-left: 1px solid #232323; font: 600 12.500px Roboto, sans-serif; color: #aaa; letter-spacing: 0; padding-right: 1px; }
.bulb { width: 34px; margin-left: 5px; border-left: 1px solid #232323; }
.aud { width: 33px; }
.fx { width: 53px; justify-content: flex-start; padding-left: 7px; gap: 7px; }
.vis { width: 42px; gap: 3px; }
.grid { width: 53px; justify-content: flex-start; padding-left: 5px; gap: 7px; }
.tl { width: 33px; border-left: 1px solid #232323; }
.cam { width: 44px; gap: 7px; margin-left: 1px; justify-content: flex-start; padding-left: 7px; }
.giz { width: 87px; justify-content: flex-start; padding-left: 4px; }
.giz span { width: 61px; letter-spacing: .2px; }
.giz svg { margin-left: 6px; }

.tcon { padding-left: 10px; gap: 6px; width: 121px; letter-spacing: .1px; }
.tani { gap: 4px; width: 126px; letter-spacing: .15px; }
.tmat { gap: 3px; width: 105px; letter-spacing: .15px; }
.tprj { padding-left: 10px; gap: 4px; width: 102px; }
.pbar .searchbox { width: 375px; margin-right: 2px; }
.pb { height: 25px; width: 33px; border-left: 1px solid #232323; display: flex; align-items: center; justify-content: center; padding: 0 3px 2px 0; }
.pb.gray { color: #8a8a8a; }
.pb.cnt { width: 50px; letter-spacing: -.2px; padding-right: 1px; }
.pmain { flex: 1; display: flex; min-height: 0; }
.ptree { width: 139px; border-right: 1px solid #232323; overflow: hidden; }
.prow { height: 20px; display: flex; align-items: center; }
.top { padding-left: 5px; }
.top .pf { width: 11px; }
.top > svg:nth-child(2) { margin-left: 7px; }
.top b { margin-left: 6px; letter-spacing: .3px; }
.top > svg[width="14"] + b { margin-left: 7px; }
.sub { padding-left: 39px; gap: 5px; }
.sub svg[width="15"] { margin-right: 1px; }
.asset { margin-top: 19px; }
.asset b { margin-left: 4px; }
.cur { background: #4d4d4d; }
.pbody { flex: 1; display: flex; flex-direction: column; background: #333; }
.crumbs { height: 26px; background: #404040; border-bottom: 1px solid #232323; display: flex; align-items: center; padding-left: 5px; letter-spacing: .15px; color: #aeaeae; }
.crumbs svg { margin: 0 7px 0 9px; }
.crumbs b { color: #c9c9c9; }
.files { flex: 1; padding: 18px 0 0 29px; }
.file { width: 57px; display: flex; flex-direction: column; align-items: center; font-size: 12.500px; letter-spacing: .5px; }
.file span { margin-top: 6px; }
.pfoot { height: 27px; background: #404040; border-top: 1px solid #232323; display: flex; justify-content: flex-end; align-items: center; padding-right: 20px; }
.slider { width: 69px; height: 3px; background: #5e5e5e; display: flex; align-items: center; padding-left: 33px; }
.knob { width: 12px; height: 13px; border-radius: 50%; background: #999; }

.tins { width: 119px; padding-left: 12px; gap: 6px; letter-spacing: .1px; }
.tnav { padding-left: 10px; gap: 6px; letter-spacing: .3px; }
.inspector .tabend { gap: 14px; padding-right: 15px; }
.iwrap { flex: 1; display: flex; min-height: 0; }
.icontent { width: 587px; }
.strip { height: 6px; background: #3e3e3e; border-bottom: 1px solid #303030; }
.props { padding-left: 24px; letter-spacing: .2px; }
.transform { padding-top: 4px; height: 88px; }
.irow { height: 25px; display: flex; align-items: center; }
.irow label { width: 223px; letter-spacing: .13px; }
.irow u { width: 15px; padding-left: 1px; letter-spacing: 0; }
.fld { width: 93px; height: 23px; background: #2a2a2a; border: 1px solid #212121; border-top-color: #0d0d0d; border-radius: 4px; padding: 1px 0 0 2px; letter-spacing: .35px; color: #d6d6d6; margin-right: 5px; }
.fld + u { padding-left: 0; }
.fld + u + .fld + u { margin-left: 1px; }
.fld.mix { color: #777; line-height: 18px; }
.fld.long { width: 335px; }
.chead { height: 28px; background: #3e3e3e; border-top: 1px solid #1a1a1a; border-bottom: 1px solid #303030; display: flex; align-items: center; padding-left: 7px; }
.ci { margin: 0 6px 0 8px; }
.cb { width: 17px; height: 18px; background: #2a2a2a; border: 1px solid #212121; border-top-color: #0d0d0d; border-radius: 3px; display: flex; align-items: center; justify-content: center; }
.chead b { margin-left: 8px; padding-top: 1px; color: #d4d4d4; letter-spacing: .15px; }
.hico { margin-left: auto; display: flex; gap: 12px; align-items: center; padding-right: 14px; }
.hico svg:last-child { margin-left: 5px; }
.sr { padding-top: 5px; height: 264px; }
.obj { width: 335px; height: 23px; background: #2a2a2a; border: 1px solid #212121; border-radius: 4px; display: flex; align-items: center; padding-left: 3px; gap: 2px; color: #d2d2d2; }
.obj.plain { padding-left: 2px; letter-spacing: .1px; }
.obj span { flex: 1; padding-top: 1px; }
.pk { width: 23px; height: 21px; background: #373737; display: flex; align-items: center; justify-content: center; border-radius: 0 3px 3px 0; }
.color { width: 335px; height: 23px; border: 1px solid #212121; border-left: 0; border-radius: 0 4px 4px 0; display: flex; align-items: center; gap: 6px; color: #b8b8b8; }
.swatch { width: 311px; height: 20px; background: #fff; margin-top: -1px; }
.irow .fx1 { width: 20px; padding-left: 5px; }
.irow .fx2 { padding-left: 6px; }
.dd { width: 334px; height: 22px; background: #515151; border: 1px solid #303030; border-bottom-color: #242424; border-radius: 4px; display: flex; align-items: center; justify-content: space-between; padding: 0 7px 0 4px; color: #e0e0e0; margin-top: -1px; }
.foldrow { margin-left: -17px; gap: 7px; }
.foldrow b { letter-spacing: .3px; }
.foldrow span { margin-left: -1px; }
.ind label { padding-left: 18px; }
.bc { padding-top: 5px; height: 324px; }
.edit { height: 35px; align-items: flex-start; padding-top: 1px; }
.edit label { width: 221px; padding-top: 1px; }
.ebtn { width: 40px; height: 28px; border: 1px solid #1e1e1e; border-radius: 4px; margin-top: 2px; display: flex; align-items: center; justify-content: center; background: #3a3a3a; }
.helpbox { width: 560px; height: 48px; margin: 1px 0 0 -2px; background: #404040; border: 1px solid #232323; border-radius: 4px; display: flex; align-items: center; gap: 6px; padding-left: 6px; font-size: 12.500px; letter-spacing: .4px; color: #bdbdbd; }
.helpbox span { padding-top: 2px; }
.mat { height: 69px; background: #3c3c3c; border-top: 1px solid #1a1a1a; display: flex; }
.mprev { width: 66px; padding: 13px 0 0 8px; color: #747474; }
.msq { width: 30px; height: 30px; background: #fff; margin-left: 17px; }
.mprev svg { margin-top: 6px; }
.minfo { width: 516px; }
.mtop { height: 33px; display: flex; align-items: center; gap: 12px; padding: 0 3px 0 3px; letter-spacing: .5px; color: #a9a9a9; font-size: 15.500px; }
.mtop span { flex: 1; }
.mtop svg { color: #c4c4c4; }
.mbot { height: 26px; display: flex; align-items: center; color: #757575; letter-spacing: .4px; }
.mbot > span { width: 64px; padding-top: 2px; }
.dd.off { width: 390px; background: #454545; border-color: #414141; color: #858585; letter-spacing: .15px; margin-top: 0; }
.editb { width: 56px; height: 22px; margin-left: 5px; border-radius: 4px; background: #474747; text-align: center; color: #9a9a9a; line-height: 21px; letter-spacing: .2px; }
.gapline { height: 15px; border: solid #1a1a1a; border-width: 1px 0; }
.addwrap { padding: 10px 0 0 150px; }
.addbtn { width: 287px; height: 29px; background: #585858; border: 1px solid #303030; border-radius: 4px; text-align: center; line-height: 30px; color: #eee; letter-spacing: .15px; }
.scroll { width: 15px; background: #353535; display: flex; flex-direction: column; align-items: center; padding-top: 8px; }
.thumb { width: 13px; height: 752px; margin: 90px 0 9px; background: #5f5f5f; border-radius: 7px; }

.status { height: 26px; display: flex; justify-content: flex-end; color: #c4c4c4; }
.status div { width: 33.300px; border-left: 1px solid #2b2b2b; display: flex; align-items: center; justify-content: center; padding-top: 2px; }
.status div:last-child { padding-right: 3px; }

.taskbar { height: 60px; display: flex; background: linear-gradient(90deg, #1e1b1b 0, #262221 580px, #2c1e1d 690px, #401615 780px, #3c1716 850px, #272020 920px, #242020 1080px, #2c1a1a 1180px, #401415 1300px, #301a1a 1420px, #262020 1560px, #272120 1820px, #421315 1900px, #4a1214 1920px); }
.widget { margin: 17px 0 0 22px; }
.apps { margin-left: 556px; display: flex; gap: 5px; padding-top: 5px; }
.apps > div { width: 50px; height: 50px; display: grid; grid-template-rows: 50px; place-items: center; border-radius: 5px; }
.run::after { content: ""; width: 8px; height: 4px; border-radius: 2px; background: #9b9594; margin-top: -10px; }
.active { background: #383130; }
.active::after { width: 20px; background: #0a84ee; }
.tray { margin-left: auto; display: flex; align-items: center; font: 14.500px/20px "Open Sans", "Noto Sans", sans-serif; letter-spacing: -.2px; color: #f2f2f2; }
.lang { width: 40px; margin: 1px 18px 0 15px; display: flex; flex-direction: column; align-items: center; }
.wifi { margin-right: 10px; }
.snd { margin-right: 11px; }
.bat { margin-right: 10px; }
.clock { width: 74px; display: flex; flex-direction: column; align-items: flex-end; }
.badge { width: 20px; height: 20px; border-radius: 50%; background: #0a84ee; color: #000; text-align: center; margin: 0 25px 0 14px; }
```
